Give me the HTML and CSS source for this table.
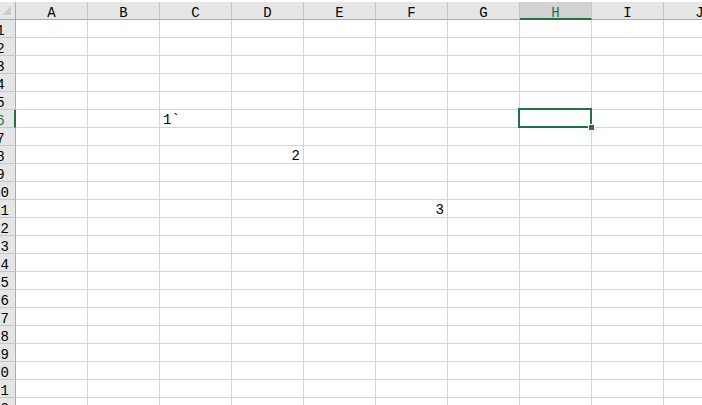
FILE: index.html
```html
<!DOCTYPE html>
<html>
<head>
<meta charset="utf-8">
<link rel="stylesheet" href="styles.css">
</head>
<body>
<div class="sheet">
  <div class="corner"><svg class="tri" width="16" height="16" viewBox="0 0 16 16"><polygon points="3,13 12,13 12,4" fill="#cdcdcd"/></svg></div>
  <div class="ch">A</div><div class="ch">B</div><div class="ch">C</div><div class="ch">D</div><div class="ch">E</div><div class="ch">F</div><div class="ch">G</div><div class="ch sel">H</div><div class="ch">I</div><div class="ch">J</div>

  <div class="rh">1</div><div class="c"></div><div class="c"></div><div class="c"></div><div class="c"></div><div class="c"></div><div class="c"></div><div class="c"></div><div class="c"></div><div class="c"></div><div class="c"></div>
  <div class="rh">2</div><div class="c"></div><div class="c"></div><div class="c"></div><div class="c"></div><div class="c"></div><div class="c"></div><div class="c"></div><div class="c"></div><div class="c"></div><div class="c"></div>
  <div class="rh">3</div><div class="c"></div><div class="c"></div><div class="c"></div><div class="c"></div><div class="c"></div><div class="c"></div><div class="c"></div><div class="c"></div><div class="c"></div><div class="c"></div>
  <div class="rh">4</div><div class="c"></div><div class="c"></div><div class="c"></div><div class="c"></div><div class="c"></div><div class="c"></div><div class="c"></div><div class="c"></div><div class="c"></div><div class="c"></div>
  <div class="rh">5</div><div class="c"></div><div class="c"></div><div class="c"></div><div class="c"></div><div class="c"></div><div class="c"></div><div class="c"></div><div class="c"></div><div class="c"></div><div class="c"></div>
  <div class="rh sel">6</div><div class="c"></div><div class="c"></div><div class="c"><span class="txt">1`</span></div><div class="c"></div><div class="c"></div><div class="c"></div><div class="c"></div><div class="c active"><span class="handle"></span></div><div class="c"></div><div class="c"></div>
  <div class="rh">7</div><div class="c"></div><div class="c"></div><div class="c"></div><div class="c"></div><div class="c"></div><div class="c"></div><div class="c"></div><div class="c"></div><div class="c"></div><div class="c"></div>
  <div class="rh">8</div><div class="c"></div><div class="c"></div><div class="c"></div><div class="c num"><span class="txt">2</span></div><div class="c"></div><div class="c"></div><div class="c"></div><div class="c"></div><div class="c"></div><div class="c"></div>
  <div class="rh">9</div><div class="c"></div><div class="c"></div><div class="c"></div><div class="c"></div><div class="c"></div><div class="c"></div><div class="c"></div><div class="c"></div><div class="c"></div><div class="c"></div>
  <div class="rh">10</div><div class="c"></div><div class="c"></div><div class="c"></div><div class="c"></div><div class="c"></div><div class="c"></div><div class="c"></div><div class="c"></div><div class="c"></div><div class="c"></div>
  <div class="rh">11</div><div class="c"></div><div class="c"></div><div class="c"></div><div class="c"></div><div class="c"></div><div class="c num"><span class="txt">3</span></div><div class="c"></div><div class="c"></div><div class="c"></div><div class="c"></div>
  <div class="rh">12</div><div class="c"></div><div class="c"></div><div class="c"></div><div class="c"></div><div class="c"></div><div class="c"></div><div class="c"></div><div class="c"></div><div class="c"></div><div class="c"></div>
  <div class="rh">13</div><div class="c"></div><div class="c"></div><div class="c"></div><div class="c"></div><div class="c"></div><div class="c"></div><div class="c"></div><div class="c"></div><div class="c"></div><div class="c"></div>
  <div class="rh">14</div><div class="c"></div><div class="c"></div><div class="c"></div><div class="c"></div><div class="c"></div><div class="c"></div><div class="c"></div><div class="c"></div><div class="c"></div><div class="c"></div>
  <div class="rh">15</div><div class="c"></div><div class="c"></div><div class="c"></div><div class="c"></div><div class="c"></div><div class="c"></div><div class="c"></div><div class="c"></div><div class="c"></div><div class="c"></div>
  <div class="rh">16</div><div class="c"></div><div class="c"></div><div class="c"></div><div class="c"></div><div class="c"></div><div class="c"></div><div class="c"></div><div class="c"></div><div class="c"></div><div class="c"></div>
  <div class="rh">17</div><div class="c"></div><div class="c"></div><div class="c"></div><div class="c"></div><div class="c"></div><div class="c"></div><div class="c"></div><div class="c"></div><div class="c"></div><div class="c"></div>
  <div class="rh">18</div><div class="c"></div><div class="c"></div><div class="c"></div><div class="c"></div><div class="c"></div><div class="c"></div><div class="c"></div><div class="c"></div><div class="c"></div><div class="c"></div>
  <div class="rh">19</div><div class="c"></div><div class="c"></div><div class="c"></div><div class="c"></div><div class="c"></div><div class="c"></div><div class="c"></div><div class="c"></div><div class="c"></div><div class="c"></div>
  <div class="rh">20</div><div class="c"></div><div class="c"></div><div class="c"></div><div class="c"></div><div class="c"></div><div class="c"></div><div class="c"></div><div class="c"></div><div class="c"></div><div class="c"></div>
  <div class="rh">21</div><div class="c"></div><div class="c"></div><div class="c"></div><div class="c"></div><div class="c"></div><div class="c"></div><div class="c"></div><div class="c"></div><div class="c"></div><div class="c"></div>
  <div class="rh">22</div><div class="c"></div><div class="c"></div><div class="c"></div><div class="c"></div><div class="c"></div><div class="c"></div><div class="c"></div><div class="c"></div><div class="c"></div><div class="c"></div>
</div>
</body>
</html>
```
FILE: styles.css
```css
html, body {
  margin: 0;
  padding: 0;
  background: #ffffff;
  overflow: hidden;
  width: 702px;
  height: 405px;
}

.sheet {
  display: grid;
  grid-template-columns: 31px repeat(10, 72px);
  grid-auto-rows: 18px;
  margin-top: 2px;
  margin-left: -15px;
  width: 751px;
  font-family: "Liberation Mono", "DejaVu Sans Mono", monospace;
  font-size: 14px;
  color: #000000;
}

.corner {
  box-sizing: border-box;
  background: #e6e6e6;
  border-right: 1px solid #ababab;
  border-bottom: 1px solid #ababab;
  display: flex;
  justify-content: flex-end;
  align-items: flex-start;
}

.tri {
  display: block;
}

.ch {
  box-sizing: border-box;
  background: #e6e6e6;
  border-right: 1px solid #c6c6c6;
  border-bottom: 1px solid #ababab;
  display: flex;
  justify-content: center;
  align-items: flex-end;
  line-height: 10px;
  padding-bottom: 1px;
}

.ch.sel {
  background: #d2d2d2;
  color: #217346;
  border-bottom: 2px solid #217346;
  padding-bottom: 0;
}

.rh {
  box-sizing: border-box;
  background: #e6e6e6;
  border-right: 1px solid #ababab;
  border-bottom: 1px solid #c6c6c6;
  display: flex;
  justify-content: center;
  align-items: flex-end;
  line-height: 10px;
  padding-bottom: 1px;
  padding-left: 1px;
}

.rh.sel {
  color: #217346;
  border-right: 2px solid #217346;
  padding-left: 2px;
}

.c {
  box-sizing: border-box;
  border-right: 1px solid #d4d4d4;
  border-bottom: 1px solid #d4d4d4;
  display: flex;
  align-items: flex-end;
  justify-content: flex-start;
  padding: 0 2px 2px 3px;
  line-height: 9px;
  position: relative;
}

.c.num {
  justify-content: flex-end;
  padding-right: 3px;
}

.txt {
  white-space: nowrap;
}

.c.active::before {
  content: "";
  position: absolute;
  top: -2px;
  left: -2px;
  right: -1px;
  bottom: -1px;
  border: 2px solid #217346;
}

.handle {
  position: absolute;
  right: -4px;
  bottom: -4px;
  width: 5px;
  height: 5px;
  background: #217346;
  border: 1px solid #ffffff;
  z-index: 2;
}
```
